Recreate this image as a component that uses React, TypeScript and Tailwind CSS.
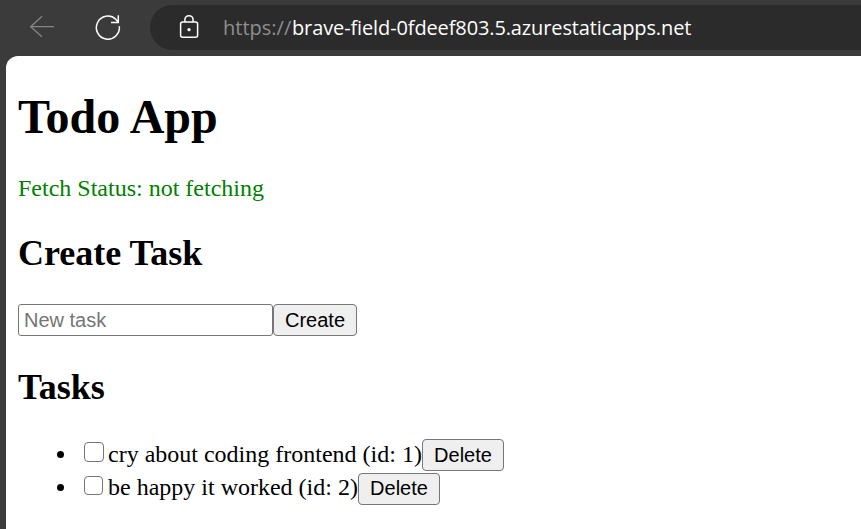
type Task = { id: number; title: string; bullet: string; box: string; label: string; button: string };

const tasks: Task[] = [
  { id: 1, title: 'cry about coding frontend', bullet: 'mt-[12px]', box: 'size-5 ml-[20px] mt-[3px]', label: 'ml-[4px] w-[314px] leading-[30px]', button: 'pb-0' },
  { id: 2, title: 'be happy it worked', bullet: 'mt-[11px]', box: 'size-[19px] ml-[20px] mr-px mt-[3px]', label: 'ml-[4px] w-[250px] leading-[28px]', button: 'pb-[2px]' },
];

const buttonStyle =
  'h-8 shrink-0 rounded-[4px] border border-[#767676] bg-[#efefef] font-["Liberation_Sans",Arial,sans-serif] text-[20px] leading-[28px] text-black whitespace-nowrap';

function BrowserBar() {
  return (
    <header className="flex h-14 items-start bg-[#3b3b3b]">
      <svg className="mt-[14px] ml-[28px] size-7 shrink-0" viewBox="0 0 28 28" fill="none" stroke="#858585" strokeWidth="1.3">
        <path d="M26 12.7H2.7M14 2.3L2.7 12.7L14 22.7" />
      </svg>
      <svg className="mt-[13px] ml-[38px] size-7 shrink-0" viewBox="0 0 28 28" fill="none" stroke="#ffffff" strokeWidth="1.5">
        <path d="M25.3 13.2A11.5 11.5 0 1 1 21.8 6.3L24.3 9.2M24.3 2.2V9.4H17" />
      </svg>
      <div className="mt-[5px] ml-[28px] flex h-[45px] flex-1 items-start rounded-l-full bg-[#2b2b2b]">
        <svg className="mt-[9px] ml-[28px] h-[26px] w-[22px] shrink-0" viewBox="0 0 22 26" fill="none" stroke="#ffffff" strokeWidth="1.5">
          <rect x="2.6" y="8" width="17" height="15.3" rx="2" />
          <path d="M6.9 8V5.8a4.1 4.1 0 0 1 8.2 0V8" />
          <circle cx="11" cy="15.7" r="1.6" fill="#ffffff" stroke="none" />
        </svg>
        <div className='ml-[23px] flex h-[45px] font-["Open_Sans",sans-serif] text-[20px] leading-[45px] whitespace-nowrap'>
          <span className="w-[69px] text-[#8e8e8e]">https://</span>
          <span className="tracking-[-0.12px] text-white">brave-field-0fdeef803.5.azurestaticapps.net</span>
        </div>
      </div>
    </header>
  );
}

export default function App() {
  return (
    <div className='flex h-[529px] w-[861px] flex-col overflow-hidden bg-[#3b3b3b] font-["Liberation_Serif","Times_New_Roman",serif] text-black'>
      <BrowserBar />
      <main className="ml-[6px] flex-1 rounded-tl-[12px] bg-white pt-[33px] pl-3">
        <h1 className="h-[85px] text-[48px] leading-[56px] font-bold">Todo App</h1>
        <p className="h-[58px] text-[24px] leading-7 text-[#008000]">Fetch Status: not fetching</p>
        <h2 className="h-[72px] text-[36px] leading-[42px] font-bold">Create Task</h2>
        <form className="flex h-[62px]">
          <input
            placeholder="New task"
            className='h-8 w-[255px] rounded-[3px] border border-[#767676] px-[5px] font-["Liberation_Sans",Arial,sans-serif] text-[20px] placeholder:text-[#757575]'
          />
          <button type="button" className={`${buttonStyle} w-[84px]`}>Create</button>
        </form>
        <h2 className="h-[73px] text-[36px] leading-[42px] font-bold">Tasks</h2>
        <ul className="flex flex-col gap-[2px]">
          {tasks.map((task) => (
            <li key={task.id} className="flex h-8 items-start pl-[39px] text-[24px] whitespace-nowrap">
              <span className={`size-[7px] shrink-0 rounded-full bg-black ${task.bullet}`} />
              <input
                type="checkbox"
                className={`shrink-0 appearance-none rounded-[4px] border-[1.5px] border-[#767676] bg-white ${task.box}`}
              />
              <span className={task.label}>{`${task.title} (id: ${task.id})`}</span>
              <button type="button" className={`${buttonStyle} w-[82px] ${task.button}`}>Delete</button>
            </li>
          ))}
        </ul>
      </main>
    </div>
  );
}
